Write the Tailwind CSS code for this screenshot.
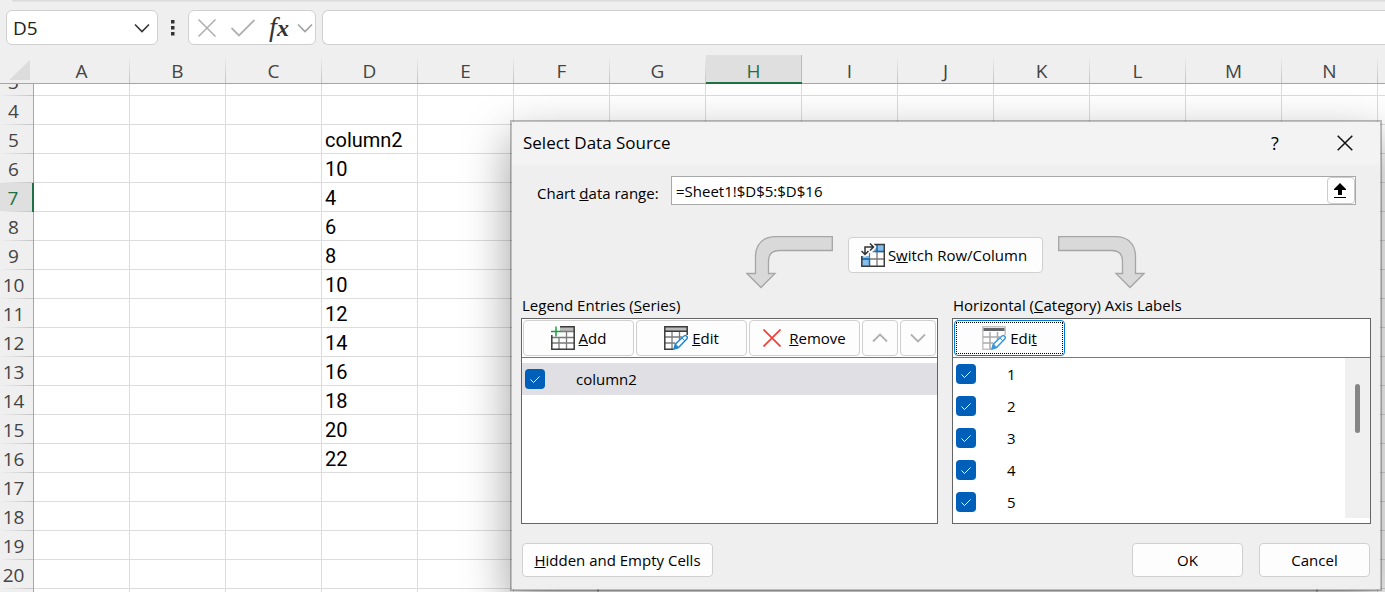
<!DOCTYPE html>
<html lang="en">

<head>
    <meta charset="UTF-8" />
    <meta name="viewport" content="width=device-width, initial-scale=1.0" />
    <title>Select Data Source</title>
    <script src="https://cdn.jsdelivr.net/npm/@tailwindcss/browser@4"></script>
</head>

<body class="relative h-screen overflow-hidden bg-[#efefef] font-['Open_Sans',sans-serif] text-black">

    <!-- Ribbon edge -->
    <div class="ml-3 h-0.5 rounded-bl bg-linear-to-b from-[#d6d6d6] to-[#e8e8e8]"></div>

    <!-- Formula bar -->
    <div class="flex h-[53px] items-start pt-2 pl-1.5">
        <div class="relative w-[152px] shrink-0">
            <input type="text" value="D5" aria-label="Name Box"
                class="h-[35px] w-full rounded-md border border-[#d0d0d0] bg-white px-1.5 text-[19px] text-[#222]" />
            <svg class="absolute top-3 right-2 h-3 w-4" viewBox="0 0 16 12" fill="none" stroke="#333" stroke-width="1.6">
                <path d="M1 2.5l7 7 7-7" />
            </svg>
        </div>
        <svg class="mt-2 ml-3 h-5 w-1.5 shrink-0" viewBox="0 0 6 20" fill="#333">
            <path d="M1 2h3.500v3.500H1zM1 8h3.500v3.500H1zM1 14h3.500v3.500H1z" />
        </svg>
        <div class="ml-3 flex h-[35px] w-[128px] shrink-0 items-center rounded-md border border-[#d0d0d0] bg-white pl-2">
            <button aria-label="Cancel entry">
                <svg class="block h-5 w-5" viewBox="0 0 20 20" fill="none" stroke="#b0b0b0" stroke-width="1.6">
                    <path d="M1.500 1.500l17 17M18.500 1.500l-17 17" />
                </svg>
            </button>
            <button aria-label="Enter" class="ml-3.5">
                <svg class="block h-5 w-6" viewBox="0 0 24 20" fill="none" stroke="#b0b0b0" stroke-width="1.8">
                    <path d="M.5 10l7.500 7.500L23.500 2" />
                </svg>
            </button>
            <button aria-label="Insert function"
                class="ml-3.5 w-5 font-['Liberation_Serif',serif] text-[28px] leading-8 text-[#333] italic">f<b class="text-2xl">x</b></button>
            <button aria-label="More functions" class="ml-2">
                <svg class="block h-3 w-4" viewBox="0 0 16 12" fill="none" stroke="#a0a0a0" stroke-width="1.6">
                    <path d="M1 2.500l7 7 7-7" />
                </svg>
            </button>
        </div>
        <input type="text" aria-label="Formula Bar"
            class="ml-1.5 h-[35px] min-w-0 flex-1 rounded-l-md border border-r-0 border-[#d0d0d0] bg-white px-2 text-lg" />
    </div>

    <!-- Sheet -->
    <div class="overflow-hidden">
        <table class="w-[1474px] table-fixed border-separate border-spacing-0 bg-white">
            <thead id="cols"></thead>
            <tbody id="rows"></tbody>
        </table>
    </div>

    <!-- Chart behind the dialog -->
    <div class="absolute top-80 right-[67px] -bottom-8 left-[597px] border-2 border-[#ccc] bg-white"></div>

    <!-- Dialog -->
    <div role="dialog" aria-labelledby="title"
        class="absolute top-[120px] right-[3px] left-[510px] border-2 border-black/25 bg-[#efefef] bg-clip-padding pb-3 text-[15px] leading-5 shadow-[0_18px_44px_rgba(0,0,0,0.38)]">
        <div class="flex h-[43px] items-center bg-[#f3f3f3] pr-[27px] pb-0.5 pl-[11px]">
            <h1 id="title" class="flex-1 text-[17px]">Select Data Source</h1>
            <button aria-label="Help" class="w-5 text-lg">?</button>
            <button aria-label="Close" class="ml-[52px]">
                <svg class="block h-4 w-4" viewBox="0 0 16 16" fill="none" stroke="#111" stroke-width="1.5">
                    <path d="M.7.7l14.600 14.600M15.300.7L.7 15.300" />
                </svg>
            </button>
        </div>

        <div class="mt-[11px] flex items-center pr-6 pl-[25px]">
            <label for="range" class="w-[134px] shrink-0 pt-1">Chart <u>d</u>ata range:</label>
            <div class="flex h-[29px] flex-1 border border-[#a8a8a8] bg-white">
                <input id="range" type="text" value="=Sheet1!$D$5:$D$16" class="min-w-0 flex-1 px-1" />
                <button aria-label="Collapse dialog"
                    class="flex w-7 items-center justify-center rounded border border-[#ccc] bg-[#fdfdfd] pr-0.5">
                    <svg class="h-4 w-3" viewBox="0 0 12 16">
                        <path d="M6 0l6 6v1H8v5H4V7H0V6zM0 14h12v1H0z" />
                    </svg>
                </button>
            </div>
        </div>

        <div class="mt-[31px] flex items-start justify-center gap-[15px] pr-0.5">
            <svg class="h-[53px] w-[87px]" viewBox="0 0 87 53" fill="#d9d9d9" stroke="#a6a6a6" stroke-width="1.300">
                <path d="M86.300.7V14.500H33Q22.500 15 22.500 25V37.500H29L15 51.500 1 37.500H9.500V19Q11 2 28 .7z" />
            </svg>
            <button class="mt-px flex h-9 w-[195px] items-center justify-center gap-[3px] rounded border border-[#d0d0d0] bg-[#fdfdfd] pr-0.5">
                <svg class="h-6 w-6" viewBox="0 0 24 24" fill="none">
                    <path d="M13 2h10v7H13zM1 13h7v10H1z" fill="#83beec" />
                    <path d="M8.500 8.500V23M16 2v21M1 16h22M8 8.500h15" stroke="#777" stroke-width="1.300" />
                    <path d="M8.500 16V23M16 2v6.500M1 16h7.500M14 8.500h9" stroke="#0f6cbd" stroke-width="1.300" />
                    <path d="M13 1.500h10.300v21.800H.8V13" stroke="#3b3b3b" stroke-width="1.500" />
                    <path d="M0 0h12l3.500 4-5 6H8L4 14 0 12z" fill="#fdfdfd" />
                    <path d="M4 11.500V4h8.500M9 .5L12.500 4 9 7.500M.5 8L4 11.500 7.500 8" stroke="#333" stroke-width="1.500" />
                </svg>
                <span>S<u>w</u>itch Row/Column</span>
            </button>
            <svg class="h-[53px] w-[87px]" viewBox="0 0 87 53" fill="#d9d9d9" stroke="#a6a6a6" stroke-width="1.300">
                <path d="M.7.7V14.500H54Q64.500 15 64.500 25V37.500H58L72 51.500 86 37.500H77.500V19Q76 2 59 .7z" />
            </svg>
        </div>

        <div class="mt-1.5 flex gap-3.5 pr-[9px] pl-[9px]">
            <!-- Series -->
            <section class="flex-[417]">
                <h2 class="mb-[3px] pl-px">Legend Entries (<u>S</u>eries)</h2>
                <div class="h-[206px] border border-[#646464] bg-white">
                    <div class="flex h-[39px] gap-0.5 border-b border-[#777] p-px">
                        <button class="flex w-[111px] items-center justify-center gap-1 rounded border border-[#d0d0d0] bg-[#fdfdfd]">
                            <svg class="h-6 w-6" viewBox="0 0 24 24" fill="none">
                                <path d="M9 1h14v4H9z" fill="#bbb" />
                                <path d="M1 11.500h22M1 17h22M8 11v12M15.500 5v18M10 5.500h13" stroke="#7a7a7a" stroke-width="1.300" />
                                <path d="M9 .8h14.200v22.400H.8V9" stroke="#3b3b3b" stroke-width="1.500" />
                                <path d="M0 5.500h10M5 .5v10" stroke="#1f9d45" stroke-width="1.500" />
                            </svg>
                            <span><u>A</u>dd</span>
                        </button>
                        <button class="flex w-[111px] items-center justify-center gap-1 rounded border border-[#d0d0d0] bg-[#fdfdfd]">
                            <svg class="h-6 w-6" viewBox="0 0 24 24" fill="none">
                                <path d="M1 1h22v4H1z" fill="#bbb" />
                                <path d="M1 11h17M1 17h10M8 5v18M15.500 5v9" stroke="#7a7a7a" stroke-width="1.300" />
                                <path d="M9 23.200H.8V.8h22.400V9M1 5.300h22" stroke="#3b3b3b" stroke-width="1.500" />
                                <path d="M10 23l1.500-5 8.500-8q1.500-1 2.700.3t0 2.700L14.500 21.500z" fill="#fff" stroke="#2488d0" stroke-width="1.500" />
                                <path d="M10 23l1.500-5 3 3.500zM18 12l3 3" fill="#2488d0" stroke="#2488d0" />
                            </svg>
                            <span><u>E</u>dit</span>
                        </button>
                        <button class="flex w-[111px] items-center justify-center gap-2 rounded border border-[#d0d0d0] bg-[#fdfdfd]">
                            <svg class="h-[18px] w-[18px]" viewBox="0 0 18 18" fill="none" stroke="#ee4036" stroke-width="1.700">
                                <path d="M.5.5l17 17M17.500.5l-17 17" />
                            </svg>
                            <span><u>R</u>emove</span>
                        </button>
                        <button aria-label="Move up" class="flex w-9 items-center justify-center rounded border border-[#d0d0d0] bg-[#fdfdfd]">
                            <svg class="h-2.5 w-4" viewBox="0 0 16 10" fill="none" stroke="#b0b0b0" stroke-width="1.800">
                                <path d="M1 8.500l7-7 7 7" />
                            </svg>
                        </button>
                        <button aria-label="Move down" class="flex w-9 items-center justify-center rounded border border-[#d0d0d0] bg-[#fdfdfd]">
                            <svg class="h-2.5 w-4" viewBox="0 0 16 10" fill="none" stroke="#b0b0b0" stroke-width="1.800">
                                <path d="M1 1.500l7 7 7-7" />
                            </svg>
                        </button>
                    </div>
                    <label class="mt-[5px] flex h-8 items-center bg-[#e0dfe4] pl-[3px]">
                        <span class="relative mr-[31px] h-5 w-5">
                            <input type="checkbox" checked class="block h-5 w-5 appearance-none rounded bg-[#005fb8]" />
                            <svg class="pointer-events-none absolute inset-0" viewBox="0 0 20 20" fill="none" stroke="#fff">
                                <path d="M5.500 10.500l3 3 6-6" />
                            </svg>
                        </span>
                        column2
                    </label>
                </div>
            </section>

            <!-- Categories -->
            <section class="flex-[419]">
                <h2 class="mb-[3px] pl-px">Horizontal (<u>C</u>ategory) Axis Labels</h2>
                <div class="h-[206px] border border-[#646464] bg-white">
                    <div class="flex h-[39px] border-b border-[#777] p-px">
                        <button class="w-[111px] rounded border border-[#0078d4] bg-[#fdfdfd] p-px">
                            <span class="flex h-full items-center justify-center gap-1 border border-dotted border-black">
                                <svg class="h-6 w-6" viewBox="0 0 24 24" fill="none">
                                    <path d="M9 23.200H.8V.8h22.400V9" stroke="#c4c4c4" stroke-width="1.500" />
                                    <path d="M1.500 2h21v3h-21z" fill="#666" />
                                    <path d="M1 11h17M1 17h10M8 6v17M15.500 6v8" stroke="#aaa" stroke-width="1.500" />
                                    <path d="M10 23l1.500-5 8.500-8q1.500-1 2.700.3t0 2.700L14.500 21.500z" fill="#fff" stroke="#3c98dc" stroke-width="1.500" />
                                    <path d="M10 23l1.500-5 3 3.500zM18 12l3 3" fill="#3c98dc" stroke="#3c98dc" />
                                </svg>
                                <span>Edi<u>t</u></span>
                            </span>
                        </button>
                    </div>
                    <div class="flex h-40">
                        <div id="labels" class="flex-1"></div>
                        <div class="w-[25px] bg-[#f0f0f0] pt-[26px]">
                            <div class="ml-2.5 h-[49px] w-[5px] rounded-full bg-[#868686]"></div>
                        </div>
                    </div>
                </div>
            </section>
        </div>

        <div class="mt-[19px] flex pr-2.5 pl-2.5">
            <button class="h-[34px] w-[191px] rounded border border-[#d0d0d0] bg-[#fdfdfd]"><u>H</u>idden and Empty Cells</button>
            <button class="ml-auto h-[34px] w-[111px] rounded border border-[#d0d0d0] bg-[#fdfdfd]">OK</button>
            <button class="ml-4 h-[34px] w-[111px] rounded border border-[#d0d0d0] bg-[#fdfdfd]">Cancel</button>
        </div>
    </div>

    <script>
        const letters = "ABCDEFGHIJKLMNO".split("");
        const values = { 5: "column2", 6: 10, 7: 4, 8: 6, 9: 8, 10: 10, 11: 12, 12: 14, 13: 16, 14: 18, 15: 20, 16: 22 };

        // Column headers
        let head = `<tr class="text-[19px] leading-7 text-[#444]">
            <th class="h-[29px] w-[34px] border-b border-[#a6a6a6] bg-[#efefef] p-0">
                <svg class="ml-2 block h-6 w-6" viewBox="0 0 24 24" fill="#dcdcdc"><path d="M22 3v20H1z" /></svg>
            </th>`;
        letters.forEach(c => {
            head += c === "H"
                ? `<th class="w-24 border-b-2 border-[#1e7145] bg-[#dfdfdf] p-0 font-normal text-[#1e7145]"><div class="h-[27px] border-r border-[#bbb] pt-0.5">${c}</div></th>`
                : `<th class="w-24 border-b border-[#a6a6a6] bg-[#efefef] p-0 font-normal">
                    <div class="flex h-7"><span class="flex-1 pt-0.5">${c === "O" ? "" : c}</span><i class="w-px bg-linear-to-b from-[#efefef] to-[#c4c4c4]"></i></div></th>`;
        });
        document.getElementById("cols").innerHTML = head + "</tr>";

        // Rows, the first one is scrolled half out of view
        let body = "";
        for (let r = 3; r <= 21; r++) {
            const height = r === 3 ? "h-3" : "h-[29px]";
            const side = r === 7 ? "border-r-2 border-[#1e7145] bg-[#dfdfdf] text-[#1e7145]" : "border-r border-[#a6a6a6] bg-[#efefef] text-[#444]";
            body += `<tr>
                <th class="p-0 text-[19px] leading-[26px] font-normal ${side}">
                    <div class="flex flex-col justify-end overflow-hidden ${height}">
                        <span class="pr-1.5 text-center">${r < 21 ? r : ""}</span><i class="h-px shrink-0 bg-linear-to-r from-[#efefef] to-[#c4c4c4]"></i>
                    </div>
                </th>`;
            letters.forEach(c => {
                const text = c === "D" && values[r] !== undefined ? values[r] : "";
                body += `<td class="border-r border-b border-[#dcdcdc] p-0 pt-0.5 pl-[3px] font-[Roboto,sans-serif] text-xl leading-[26px]">${text}</td>`;
            });
            body += "</tr>";
        }
        document.getElementById("rows").innerHTML = body;

        // Category labels
        let list = "";
        for (let i = 1; i <= 5; i++) {
            list += `<label class="flex h-8 items-center pl-[3px]">
                <span class="relative mr-[31px] h-5 w-5">
                    <input type="checkbox" checked class="block h-5 w-5 appearance-none rounded bg-[#005fb8]" />
                    <svg class="pointer-events-none absolute inset-0" viewBox="0 0 20 20" fill="none" stroke="#fff"><path d="M5.500 10.500l3 3 6-6" /></svg>
                </span>${i}</label>`;
        }
        document.getElementById("labels").innerHTML = list;
    </script>
</body>

</html>
